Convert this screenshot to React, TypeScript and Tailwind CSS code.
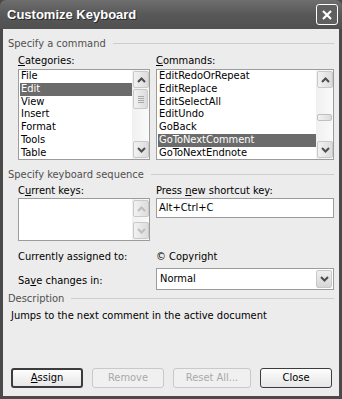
import React from "react";

const font = { fontFamily: '"DejaVu Sans Condensed", "DejaVu Sans", sans-serif' };

function Chevron({ dir, color = "#4d4d4d" }: { dir: "up" | "down"; color?: string }) {
  return (
    <svg width="9" height="6" viewBox="0 0 9 6">
      {dir === "up" ? (
        <polyline points="1,5 4.5,1.5 8,5" fill="none" stroke={color} strokeWidth="2" />
      ) : (
        <polyline points="1,1 4.5,4.5 8,1" fill="none" stroke={color} strokeWidth="2" />
      )}
    </svg>
  );
}

function SBtn({ dir, disabled }: { dir: "up" | "down"; disabled?: boolean }) {
  return (
    <div className="h-[17px] w-[16px] rounded-[2px] border border-[#c9c9c9] bg-gradient-to-r from-[#f2f2f2] to-[#dcdcdc] flex items-center justify-center">
      <Chevron dir={dir} color={disabled ? "#bdbdbd" : "#4d4d4d"} />
    </div>
  );
}

function Scrollbar({ thumb, disabled }: { thumb?: "grip" | "thin"; disabled?: boolean }) {
  return (
    <div className="w-[17px] h-full flex flex-col bg-gradient-to-r from-[#f0f0f0] to-[#fafafa] px-px pt-px pb-px">
      <SBtn dir="up" disabled={disabled} />
      {thumb === "grip" && (
        <div className="mt-[1px] h-[20px] rounded-[2px] border border-[#c9c9c9] bg-gradient-to-r from-[#f2f2f2] to-[#dcdcdc] flex flex-col items-center justify-center gap-[1px]">
          <div className="w-[6px] h-px bg-[#a8a8a8]" />
          <div className="w-[6px] h-px bg-[#a8a8a8]" />
          <div className="w-[6px] h-px bg-[#a8a8a8]" />
          <div className="w-[6px] h-px bg-[#a8a8a8]" />
        </div>
      )}
      {thumb === "thin" && (
        <div className="mt-[26px] h-[7px] rounded-[2px] border border-[#c0c0c0] bg-gradient-to-r from-[#f2f2f2] to-[#dcdcdc]" />
      )}
      <div className="flex-1" />
      <SBtn dir="down" disabled={disabled} />
    </div>
  );
}

function ListBox({ items, selected, thumb }: { items: string[]; selected: number; thumb: "grip" | "thin" }) {
  return (
    <div className="h-[91px] border border-[#9c9c9c] bg-white flex">
      <div className="flex-1 flex flex-col pl-px overflow-hidden">
        {items.map((it, i) => (
          <div
            key={it}
            className={
              "h-[12.8px] leading-[12.8px] pl-[1px] text-[11px] whitespace-nowrap shrink-0 " +
              (i === selected ? "bg-[#6b6b6b] text-white" : "text-black")
            }
          >
            {it}
          </div>
        ))}
      </div>
      <Scrollbar thumb={thumb} />
    </div>
  );
}

function GroupHeader({ label }: { label: string }) {
  return (
    <div className="h-[13px] flex items-center">
      <span className="text-[11px] leading-[13px] text-[#505050] whitespace-nowrap">{label}</span>
      <div className="flex-1 ml-[7px] h-px bg-[#cdcdcd]" />
    </div>
  );
}

function Btn({ children, w, disabled, def }: { children: React.ReactNode; w: string; disabled?: boolean; def?: boolean }) {
  return (
    <div
      className={
        "h-[20px] rounded-[3px] flex items-center justify-center text-[11px] " +
        w +
        " " +
        (disabled
          ? "border border-[#c9c9c9] text-[#a9a9a9] bg-[#f0f0f0]"
          : def
          ? "border-2 border-[#3c3c3c] bg-gradient-to-b from-[#fdfdfd] to-[#e6e6e6] text-black"
          : "border border-[#3c3c3c] bg-gradient-to-b from-[#fdfdfd] to-[#e6e6e6] text-black")
      }
    >
      {children}
    </div>
  );
}

export default function App() {
  return (
    <div className="w-[342px] h-[399px] bg-[#4a4a4a] flex flex-col" style={font}>
      {/* title bar */}
      <div className="h-[29px] flex items-center pl-[7px] pr-[4px] bg-gradient-to-b from-[#6e6e6e] via-[#585858] to-[#505050] rounded-t-[6px]">
        <span
          className="text-white font-bold text-[13px] flex-1 [text-shadow:1px_1px_0_#2a2a2a]"
          style={{ fontFamily: '"Liberation Sans", Arial, sans-serif' }}
        >
          Customize Keyboard
        </span>
        <div className="w-[22px] h-[21px] rounded-[3px] border border-white bg-[#5f5f5f] flex items-center justify-center">
          <svg width="12" height="12" viewBox="0 0 12 12">
            <path d="M2 2 L10 10 M10 2 L2 10" stroke="white" strokeWidth="2.2" />
          </svg>
        </div>
      </div>
      {/* body */}
      <div className="flex-1 mx-[3px] mb-[3px] bg-[#ececec] pl-[5px] pr-[5px] pt-[8px] pb-[8px] flex flex-col text-black">
        <GroupHeader label="Specify a command" />
        <div className="ml-[10px] mt-[4px] flex gap-[6px]">
          <div className="w-[132px] flex flex-col">
            <div className="h-[13px] text-[11px] leading-[13px]"><u>C</u>ategories:</div>
            <div className="mt-[2px]">
              <ListBox items={["File", "Edit", "View", "Insert", "Format", "Tools", "Table"]} selected={1} thumb="grip" />
            </div>
          </div>
          <div className="flex-1 flex flex-col">
            <div className="h-[13px] text-[11px] leading-[13px]"><u>C</u>ommands:</div>
            <div className="mt-[2px]">
              <ListBox
                items={["EditRedoOrRepeat", "EditReplace", "EditSelectAll", "EditUndo", "GoBack", "GoToNextComment", "GoToNextEndnote"]}
                selected={5}
                thumb="thin"
              />
            </div>
          </div>
        </div>

        <div className="mt-[8px]">
          <GroupHeader label="Specify keyboard sequence" />
        </div>
        <div className="ml-[10px] mt-[3px] flex gap-[6px]">
          <div className="w-[132px] flex flex-col">
            <div className="h-[13px] text-[11px] leading-[13px]">C<u>u</u>rrent keys:</div>
            <div className="mt-[1px] h-[43px] border border-[#9c9c9c] bg-white flex">
              <div className="flex-1" />
              <Scrollbar disabled />
            </div>
          </div>
          <div className="flex-1 flex flex-col">
            <div className="h-[13px] text-[11px] leading-[13px]">Press <u>n</u>ew shortcut key:</div>
            <div className="mt-[1px] h-[20px] border border-[#9c9c9c] bg-white flex items-center pl-[2px] text-[11px]">Alt+Ctrl+C</div>
          </div>
        </div>

        <div className="ml-[10px] mt-[9px] flex gap-[6px] h-[13px] text-[11px] leading-[13px]">
          <div className="w-[132px]">Currently assigned to:</div>
          <div className="flex-1">© Copyright</div>
        </div>

        <div className="ml-[10px] mt-[5px] flex gap-[6px] items-center">
          <div className="w-[132px] text-[11px] leading-[13px] pt-[2px]">Sa<u>v</u>e changes in:</div>
          <div className="flex-1 h-[22px] border border-[#9c9c9c] bg-white flex items-center pl-[3px] pr-px text-[11px]">
            <span className="flex-1">Normal</span>
            <div className="w-[16px] h-[18px] rounded-[2px] border border-[#c9c9c9] bg-gradient-to-b from-[#f0f0f0] to-[#d6d6d6] flex items-center justify-center">
              <Chevron dir="down" />
            </div>
          </div>
        </div>

        <div className="mt-[2px]">
          <GroupHeader label="Description" />
        </div>
        <div className="mt-[4px] ml-[3px] h-[13px] text-[11px] leading-[13px]">Jumps to the next comment in the active document</div>

        <div className="mt-auto ml-[3px] flex gap-[9px]">
          <Btn w="w-[72px]" def><span><u>A</u>ssign</span></Btn>
          <Btn w="w-[72px]" disabled>Remove</Btn>
          <Btn w="w-[78px]" disabled>Reset All...</Btn>
          <Btn w="w-[72px]">Close</Btn>
        </div>
      </div>
    </div>
  );
}
